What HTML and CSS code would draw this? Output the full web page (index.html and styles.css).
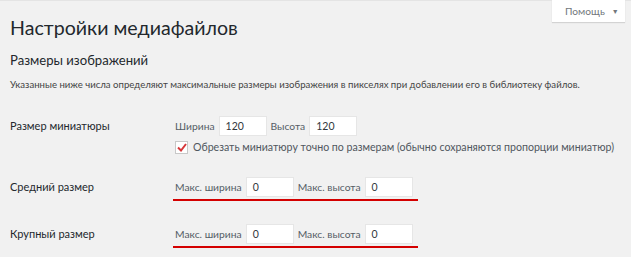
FILE: index.html
```html
<!DOCTYPE html>
<html lang="ru">
<head>
<meta charset="utf-8">
<link rel="stylesheet" href="styles.css">
</head>
<body>
<div class="topline"></div>
<div class="help-wrap"><button class="help">Помощь <span class="arrow">▼</span></button></div>
<div class="wrap">
  <h1 class="title">Настройки медиафайлов</h1>
  <h2 class="subtitle">Размеры изображений</h2>
  <p class="desc">Указанные ниже числа определяют максимальные размеры изображения в пикселях при добавлении его в библиотеку файлов.</p>
  <div class="row row-thumb">
    <div class="label">Размер миниатюры</div>
    <div class="field">
      <div class="line">
        <span class="flabel">Ширина</span><span class="input">120</span>
        <span class="flabel">Высота</span><span class="input">120</span>
      </div>
      <div class="check-line">
        <span class="checkbox"><svg width="10" height="9" viewBox="0 0 10 9"><path d="M1 4.5 L4 7.5 L9 1" fill="none" stroke="#d63638" stroke-width="2"/></svg></span>
        <span class="check-text">Обрезать миниатюру точно по размерам (обычно сохраняются пропорции миниатюр)</span>
      </div>
    </div>
  </div>
  <div class="row row-mid">
    <div class="label">Средний размер</div>
    <div class="field">
      <div class="line underlined">
        <span class="flabel">Макс. ширина</span><span class="input">0</span>
        <span class="flabel">Макс. высота</span><span class="input">0</span>
      </div>
    </div>
  </div>
  <div class="row row-large">
    <div class="label">Крупный размер</div>
    <div class="field">
      <div class="line underlined">
        <span class="flabel">Макс. ширина</span><span class="input">0</span>
        <span class="flabel">Макс. высота</span><span class="input">0</span>
      </div>
    </div>
  </div>
</div>
</body>
</html>
```
FILE: styles.css
```css
html, body {
  margin: 0;
  padding: 0;
  background: #f1f1f1;
  font-family: "Lato", "Noto Sans", sans-serif;
  color: #23282d;
  width: 631px;
  height: 257px;
  overflow: hidden;
}
.topline {
  height: 1px;
  background: #e4e4e4;
}
.help-wrap {
  position: absolute;
  top: 0;
  right: 6px;
}
.help {
  display: flex;
  align-items: center;
  gap: 7px;
  height: 22px;
  width: 73px;
  padding: 0 0 0 13px;
  border: 0;
  background: #fff;
  box-shadow: 0 1px 1px rgba(0,0,0,0.12);
  font-family: inherit;
  font-size: 10.2px;
  color: #72777c;
}
.help .arrow {
  font-size: 7px;
  color: #72777c;
}
.wrap {
  padding-left: 10px;
}
.title {
  margin: 0;
  padding-top: 14px;
  font-size: 19.6px;
  font-weight: 400;
  line-height: 26px;
  color: #23282d;
}
.subtitle {
  margin: 10px 0 0;
  font-size: 13.1px;
  font-weight: 400;
  line-height: 18px;
  color: #23282d;
}
.desc {
  margin: 9px 0 0;
  font-size: 9.6px;
  line-height: 14px;
  color: #444;
  white-space: nowrap;
}
.row {
  display: flex;
  font-size: 11px;
  color: #23282d;
}
.label {
  width: 165px;
  flex: none;
  line-height: 19px;
}
.row-thumb {
  margin-top: 24px;
}
.row-mid, .row-large {
  margin-top: 23px;
}
.line {
  display: flex;
  align-items: center;
  color: #555d66;
  height: 20px;
  font-size: 10.3px;
}
.flabel {
  margin-right: 4px;
}
.input {
  box-sizing: border-box;
  width: 48px;
  height: 20px;
  line-height: 18px;
  padding-left: 6px;
  margin-right: 4px;
  background: #fff;
  border: 1px solid #e6e6e6;
  color: #32373c;
  font-size: 10.5px;
}
.underlined {
  padding-bottom: 2px;
  border-bottom: 2px solid #d40000;
  margin-left: -2px;
  padding-left: 2px;
  padding-right: 1px;
  width: fit-content;
}
.check-line {
  display: flex;
  align-items: center;
  margin-top: 4px;
  height: 14px;
  white-space: nowrap;
  font-size: 10.6px;
}
.checkbox {
  box-sizing: border-box;
  width: 13px;
  height: 13px;
  border: 1px solid #c8c8c8;
  background: #fff;
  display: flex;
  align-items: center;
  justify-content: center;
  margin-right: 5px;
}
.check-text {
  color: #50575e;
}
```
